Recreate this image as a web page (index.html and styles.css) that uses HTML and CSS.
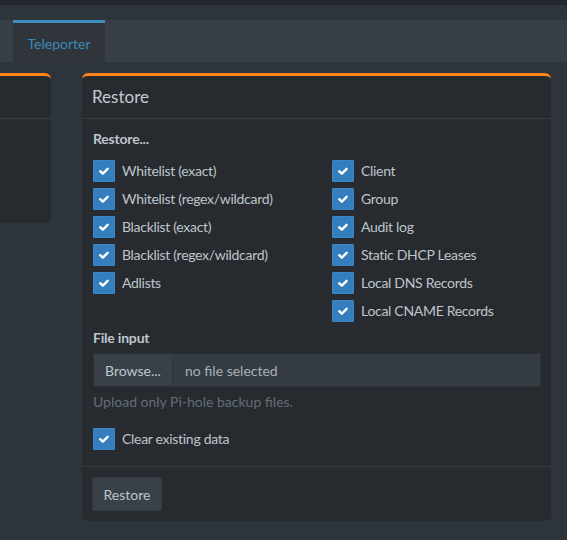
FILE: index.html
```html
<!DOCTYPE html>
<html>
<head>
<meta charset="utf-8">
<link rel="stylesheet" href="styles.css">
</head>
<body>
<div class="topbar"></div>
<div class="tabs">
  <div class="tab active">Teleporter</div>
</div>
<div class="row">
  <div class="box box-left">
    <div class="box-header"></div>
    <div class="box-body-empty"></div>
  </div>
  <div class="box box-main">
    <div class="box-header"><h3 class="box-title">Restore</h3></div>
    <div class="box-body">
      <div class="section-label">Restore...</div>
      <div class="cols">
        <div class="col">
          <label class="check"><span class="cb"><svg viewBox="0 0 22 22"><path d="M6.8 11.2 L9.7 13.8 L15 8.6"/></svg></span>Whitelist (exact)</label>
          <label class="check"><span class="cb"><svg viewBox="0 0 22 22"><path d="M6.8 11.2 L9.7 13.8 L15 8.6"/></svg></span>Whitelist (regex/wildcard)</label>
          <label class="check"><span class="cb"><svg viewBox="0 0 22 22"><path d="M6.8 11.2 L9.7 13.8 L15 8.6"/></svg></span>Blacklist (exact)</label>
          <label class="check"><span class="cb"><svg viewBox="0 0 22 22"><path d="M6.8 11.2 L9.7 13.8 L15 8.6"/></svg></span>Blacklist (regex/wildcard)</label>
          <label class="check"><span class="cb"><svg viewBox="0 0 22 22"><path d="M6.8 11.2 L9.7 13.8 L15 8.6"/></svg></span>Adlists</label>
        </div>
        <div class="col">
          <label class="check"><span class="cb"><svg viewBox="0 0 22 22"><path d="M6.8 11.2 L9.7 13.8 L15 8.6"/></svg></span>Client</label>
          <label class="check"><span class="cb"><svg viewBox="0 0 22 22"><path d="M6.8 11.2 L9.7 13.8 L15 8.6"/></svg></span>Group</label>
          <label class="check"><span class="cb"><svg viewBox="0 0 22 22"><path d="M6.8 11.2 L9.7 13.8 L15 8.6"/></svg></span>Audit log</label>
          <label class="check"><span class="cb"><svg viewBox="0 0 22 22"><path d="M6.8 11.2 L9.7 13.8 L15 8.6"/></svg></span>Static DHCP Leases</label>
          <label class="check"><span class="cb"><svg viewBox="0 0 22 22"><path d="M6.8 11.2 L9.7 13.8 L15 8.6"/></svg></span>Local DNS Records</label>
          <label class="check"><span class="cb"><svg viewBox="0 0 22 22"><path d="M6.8 11.2 L9.7 13.8 L15 8.6"/></svg></span>Local CNAME Records</label>
        </div>
      </div>
      <div class="section-label file-label">File input</div>
      <div class="input-group">
        <span class="browse">Browse...</span>
        <span class="file-name">no file selected</span>
      </div>
      <div class="help">Upload only Pi-hole backup files.</div>
      <label class="check clear"><span class="cb"><svg viewBox="0 0 22 22"><path d="M6.8 11.2 L9.7 13.8 L15 8.6"/></svg></span>Clear existing data</label>
    </div>
    <div class="box-footer">
      <span class="btn">Restore</span>
    </div>
  </div>
  <div class="side-strip"></div>
</div>
</body>
</html>
```

FILE: styles.css
```css
html, body {
  margin: 0;
  padding: 0;
}
body {
  background: #2e343b;
  font-family: Lato, "Noto Sans", sans-serif;
  font-size: 14px;
  color: #bec5cb;
  width: 567px;
  height: 540px;
  overflow: hidden;
}
.topbar {
  height: 5px;
  background: #23282d;
}
.tabs {
  margin-top: 15px;
  height: 42px;
  background: #383e46;
  display: flex;
  padding-left: 13px;
}
.tab {
  width: 92px;
  box-sizing: border-box;
  border-top: 3px solid #3c8dbc;
  background: #2f353b;
  color: #3a88b8;
  font-size: 14px;
  display: flex;
  align-items: center;
  justify-content: center;
  padding-top: 2px;
}
.row {
  display: flex;
  gap: 31px;
  margin-top: 11px;
  align-items: flex-start;
}
.box {
  background: #272b30;
  border-top: 3px solid #ff851b;
  border-radius: 6px;
  box-sizing: border-box;
  flex: none;
}
.box-left {
  margin-left: -100px;
  width: 151px;
  height: 150px;
}
.box-main {
  width: 469px;
}
.side-strip {
  flex: 1;
}
.box-header {
  height: 42px;
  border-bottom: 1px solid #363c42;
  padding: 0 10px;
  display: flex;
  align-items: center;
}
.box-title {
  margin: 0;
  font-size: 17px;
  font-weight: 400;
  color: #c2cbd2;
  padding-bottom: 1px;
}
.box-body {
  padding: 10px 10px 16px 11px;
}
.section-label {
  font-weight: 700;
  line-height: 20px;
  color: #bec5cb;
  letter-spacing: -0.2px;
}
.cols {
  display: grid;
  grid-template-columns: 209px 209px;
  column-gap: 30px;
  margin-top: 11px;
}
.col {
  display: flex;
  flex-direction: column;
  gap: 6px;
}
.check {
  display: flex;
  align-items: center;
  gap: 7px;
  height: 22px;
  line-height: 22px;
  white-space: nowrap;
  letter-spacing: -0.3px;
}
.cb {
  width: 22px;
  height: 22px;
  flex: none;
  background: #357ebd;
  border-radius: 1px;
  box-sizing: border-box;
  border: 1px solid #3a86c6;
  display: flex;
}
.cb svg {
  width: 20px;
  height: 20px;
}
.cb path {
  fill: none;
  stroke: #ffffff;
  stroke-width: 2.6;
  stroke-linecap: round;
  stroke-linejoin: round;
}
.file-label {
  margin-top: 6px;
}
.input-group {
  margin-top: 5px;
  display: flex;
  height: 34px;
  border: 1px solid #2c3137;
  box-sizing: border-box;
  border-radius: 2px;
}
.browse {
  width: 78px;
  flex: none;
  background: #3a4048;
  color: #bec5cb;
  display: flex;
  align-items: center;
  justify-content: center;
  border-right: 1px solid #31363c;
}
.file-name {
  flex: 1;
  background: #353b42;
  color: #a9b1b8;
  display: flex;
  align-items: center;
  padding-left: 12px;
}
.help {
  margin-top: 5px;
  line-height: 20px;
  color: #646d75;
}
.clear {
  margin-top: 16px;
}
.box-footer {
  border-top: 1px solid #363c42;
  padding: 10px 10px 10px 10px;
}
.btn {
  display: inline-flex;
  align-items: center;
  justify-content: center;
  width: 70px;
  height: 34px;
  box-sizing: border-box;
  background: #3a4048;
  border: 1px solid #343a41;
  border-radius: 2px;
  color: #bec5cb;
}
```
